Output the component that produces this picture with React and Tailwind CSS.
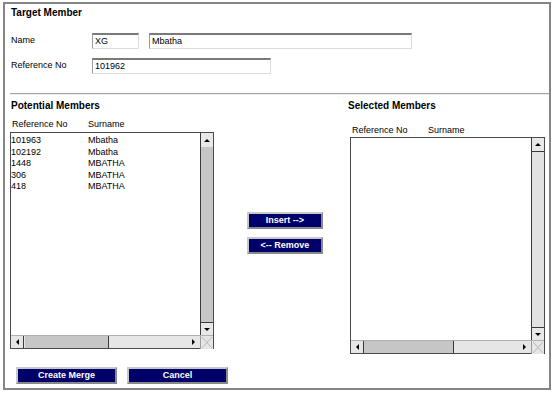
import React from "react";

const font = { fontFamily: '"Liberation Sans", Arial, sans-serif' };

const rows = [
  ["101963", "Mbatha"],
  ["102192", "Mbatha"],
  ["1448", "MBATHA"],
  ["306", "MBATHA"],
  ["418", "MBATHA"],
];

function Up() {
  return <div className="w-0 h-0 border-l-[3px] border-r-[3px] border-b-[3px] border-l-transparent border-r-transparent border-b-black" />;
}
function Down() {
  return <div className="w-0 h-0 border-l-[3px] border-r-[3px] border-t-[3px] border-l-transparent border-r-transparent border-t-black" />;
}
function Left() {
  return <div className="w-0 h-0 border-t-[3px] border-b-[3px] border-r-[3px] border-t-transparent border-b-transparent border-r-black" />;
}
function Right() {
  return <div className="w-0 h-0 border-t-[3px] border-b-[3px] border-l-[3px] border-t-transparent border-b-transparent border-l-black" />;
}

function Corner() {
  return (
    <div className="w-[13px] h-[13px] bg-[#e6e6e6] border-l border-[#9a9a9a]">
      <svg width="12" height="13" viewBox="0 0 12 13">
        <line x1="1" y1="1" x2="11" y2="12" stroke="#b8b8b8" strokeWidth="1" />
        <line x1="11" y1="1" x2="1" y2="12" stroke="#b8b8b8" strokeWidth="1" />
      </svg>
    </div>
  );
}

function ListBox({ size, full, thumbLeft, thumbWidth, children }) {
  return (
    <div className={`${size} border border-[#4a4a4a] flex flex-col bg-white`}>
      <div className="flex flex-1 min-h-0">
        <div className="flex-1">{children}</div>
        <div className="w-[13px] flex flex-col border-l border-[#3a3a3a]">
          <div className={`h-[14px] bg-[#e8e8e8] flex items-center justify-center ${full ? "" : "border-b border-[#3a3a3a]"}`}>
            <Up />
          </div>
          <div className={`flex-1 ${full ? "bg-[#c6c6c6]" : "bg-[#e2e2e2]"}`} />
          <div className="h-[13px] bg-[#e8e8e8] border-t border-[#3a3a3a] flex items-center justify-center">
            <Down />
          </div>
        </div>
      </div>
      <div className="flex h-[13px] border-t border-[#b0b0b0]">
        <div className="flex-1 flex bg-[#e6e6e6]">
          <div className="w-[13px] flex items-center justify-center border-r border-[#3a3a3a]">
            <Left />
          </div>
          <div className={`${thumbLeft}`} />
          <div className={`${thumbWidth} bg-[#c6c6c6] border-r border-[#3a3a3a]`} />
          <div className="flex-1" />
          <div className="w-[13px] flex items-center justify-center">
            <Right />
          </div>
        </div>
        <Corner />
      </div>
    </div>
  );
}

function NavyButton({ w, children }) {
  return (
    <button
      type="button"
      className={`${w} h-[17px] bg-[#00006a] text-white font-bold text-[9px] leading-none border-2 border-t-[#c8c8c8] border-l-[#c8c8c8] border-r-[#8a8a8a] border-b-[#8a8a8a] flex items-center justify-center`}
    >
      {children}
    </button>
  );
}

function Field({ w, value }) {
  return (
    <div className={`${w} h-[16px] border-t-2 border-t-[#7a7a7a] border-l border-l-[#9a9a9a] border-r border-r-[#dcdcdc] border-b border-b-[#dcdcdc] flex items-center pl-[2px] text-[9px]`}>
      {value}
    </div>
  );
}

export default function App() {
  return (
    <div className="w-[554px] h-[393px] bg-white pt-[2px] pl-[3px] text-black" style={font}>
      <div className="w-[548px] h-[388px] border-2 border-[#858585] flex flex-col">
        <div className="pl-[6px] pt-[3px] text-[10px] font-bold leading-[12px]">Target Member</div>

        <div className="mt-[14px] pl-[6px] flex items-center h-[16px] text-[9px]">
          <div className="w-[81px]">Name</div>
          <Field w="w-[47px]" value="XG" />
          <div className="w-[10px]" />
          <Field w="w-[263px]" value="Mbatha" />
        </div>

        <div className="mt-[9px] pl-[6px] flex items-center h-[16px] text-[9px]">
          <div className="w-[81px]">Reference No</div>
          <Field w="w-[179px]" value="101962" />
        </div>

        <div className="mt-[19px] ml-[5px] border-t border-[#a4a4a4] border-b border-b-[#ececec]" />

        <div className="flex items-start pt-[4px]">
          <div className="ml-[5px] w-[204px] flex flex-col">
            <div className="pl-[1px] pt-[1px] text-[10px] font-bold leading-[12px]">Potential Members</div>
            <div className="mt-[7px] pl-[2px] flex text-[9px] leading-[11px]">
              <div className="w-[76px]">Reference No</div>
              <div>Surname</div>
            </div>
            <div className="mt-[2px]">
              <ListBox size="w-[204px] h-[217px]" full thumbLeft="w-[1px]" thumbWidth="w-[84px]">
                <div className="pt-[2px] text-[9px] leading-[11.6px]">
                  {rows.map(([ref, name]) => (
                    <div key={ref} className="flex">
                      <div className="w-[77px]">{ref}</div>
                      <div>{name}</div>
                    </div>
                  ))}
                </div>
              </ListBox>
            </div>
          </div>

          <div className="w-[134px] flex flex-col gap-[8px] pl-[33px] pt-[113px]">
            <NavyButton w="w-[76px]">Insert --&gt;</NavyButton>
            <NavyButton w="w-[76px]">&lt;-- Remove</NavyButton>
          </div>

          <div className="flex flex-col">
            <div className="pt-[1px] text-[10px] font-bold leading-[12px]">Selected Members</div>
            <div className="mt-[13px] pl-[4px] flex text-[9px] leading-[11px]">
              <div className="w-[76px]">Reference No</div>
              <div>Surname</div>
            </div>
            <div className="mt-[1px] ml-[2px]">
              <ListBox size="w-[195px] h-[217px]" thumbLeft="w-0" thumbWidth="w-[90px]" />
            </div>
          </div>
        </div>

        <div className="mt-[13px] pl-[11px] flex gap-[10px]">
          <NavyButton w="w-[101px]">Create Merge</NavyButton>
          <NavyButton w="w-[101px]">Cancel</NavyButton>
        </div>
      </div>
    </div>
  );
}
